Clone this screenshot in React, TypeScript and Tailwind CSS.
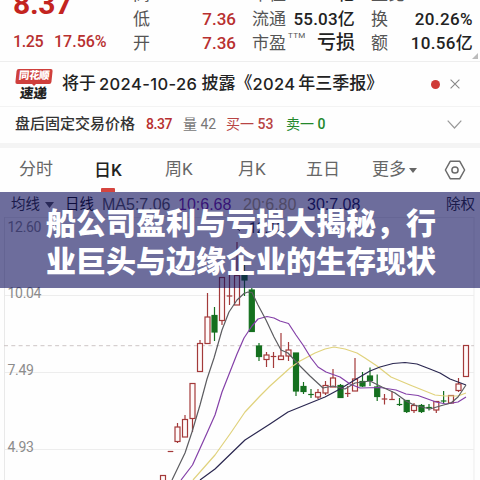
import React from 'react';

type Tone = 'up' | 'down';

interface Candle {
  x: number;
  high: number;
  top: number;
  bottom: number;
  low: number;
  tone: Tone;
}

const c = (x: number, high: number, top: number, bottom: number, low: number, tone: Tone = 'up'): Candle => ({
  x, high, top, bottom, low, tone,
});

// x, high, body top, body bottom, low
const candles: Candle[] = [
  c(163, 475.5, 475.5, 490, 490),
  c(170.5, 451.5, 451.5, 451.5, 451.5),
  c(177.5, 423, 427, 441.5, 443),
  c(185, 415, 419.5, 437, 437),
  c(192.5, 383.5, 383.5, 418.5, 432),
  c(200, 340, 343.5, 371.5, 371.5),
  c(207.5, 293, 317, 343.5, 343.5),
  c(214.5, 307, 315.5, 332, 341, 'down'),
  c(222, 277.5, 277.5, 320.5, 325),
  c(229.5, 272, 296, 296, 305),
  c(237, 242, 275.5, 305, 305),
  c(244.5, 262, 272, 280, 296, 'down'),
  c(251.8, 288, 290, 331.5, 332, 'down'),
  c(259, 343, 346, 356.5, 361, 'down'),
  c(266.5, 352, 355, 359.5, 367),
  c(273.5, 352, 356.5, 356.5, 368),
  c(281, 333, 356, 359.5, 359.5),
  c(288.5, 342, 350, 356, 361),
  c(296, 353, 353, 391, 396, 'down'),
  c(303.5, 382, 386.5, 391.5, 394, 'down'),
  c(311, 389, 394.5, 394.5, 398, 'down'),
  c(318, 389, 392.5, 397, 399),
  c(325.5, 381, 385.5, 393, 395),
  c(333, 369, 378, 387, 387),
  c(340.5, 384, 385.5, 397.5, 397.5, 'down'),
  c(347.7, 386, 393.5, 393.5, 397),
  c(355, 358, 379, 391, 391),
  c(362.5, 372, 381.5, 386, 387, 'down'),
  c(370, 367.5, 376, 380.5, 386, 'down'),
  c(377.2, 374.5, 387, 396.5, 401, 'down'),
  c(384.5, 394, 399, 399, 404.5),
  c(392, 391, 399.5, 399.5, 400),
  c(399.5, 398, 404.5, 404.5, 406, 'down'),
  c(406.7, 400, 400.5, 411.5, 413, 'down'),
  c(414, 403, 405.5, 410.5, 413),
  c(421.5, 404, 405.5, 411.5, 413, 'down'),
  c(429, 404, 407.5, 407.5, 410.5, 'down'),
  c(436.3, 401.5, 401.5, 410, 413),
  c(443.6, 391, 401, 401, 403.5, 'down'),
  c(451, 395.5, 395.5, 403, 403),
  c(458.5, 378, 384, 390.5, 392),
  c(466, 345.5, 345.5, 376.5, 376.5),
];

const averages = [
  {
    color: '#e0d27c',
    points: '193,480 215,455 230,434 245,412 260,396 270,386 290,368 300,361 315,353 325,349 334,347 345,349 357,353 365,358 377,366 391,377 410,385 435,395 445,396 458,396 466,393',
  },
  {
    color: '#2a2750',
    points: '200,480 215,469 245,440 270,424 288,412 325,397 340,389 358,378 370,371 380,367 393,363.5 405,362.5 417,364 430,369 440,373 450,379 458,382 466,385',
  },
  {
    color: '#8440a8',
    points: '181,480 192.5,465 207,433 215,415 222,392 237,354 244,338 252,326 258,319 267,316.5 274,318 280,321 288.5,323.5 296,335 303,345 311,358 318,367 326,372 340,377 350,384 360,388 380,387.5 396,390 406,394 418,395.5 436,402 446,404 458,402 466,397',
  },
  {
    color: '#5c5c60',
    points: '172,480 185,453 192,432 200,405 207,379 214,358 222,330 229,312 237,300 244,293.5 248,292 252,292.5 258,305 266,320 274,337 281,350 288,353 300,366 310,376 323,388 333,386 345,389 355,383 370,381 382,387 395,393 406,401 414,405 430,409 440,406 451,403 458,397 466,385',
  },
];

const gridLines = [217.5, 295.5, 372.5, 449.5];
const priceLabels = [
  { y: 232, label: '12.60' },
  { y: 298, label: '10.04' },
  { y: 375, label: '7.49' },
  { y: 452, label: '4.93' },
];

const CandleMark: React.FC<{ candle: Candle }> = ({ candle }) => {
  const { x, high, top, bottom, low, tone } = candle;
  const color = tone === 'up' ? '#a33a3a' : '#15701f';
  const flat = top === bottom;
  return (
    <g stroke={color} strokeWidth="1.2">
      <line x1={x} x2={x} y1={high} y2={top} />
      <line x1={x} x2={x} y1={bottom} y2={low} />
      {flat ? (
        <line x1={x - 2.8} x2={x + 2.8} y1={top} y2={top} />
      ) : (
        <rect
          x={x - 2.5}
          y={top}
          width="5"
          height={bottom - top}
          fill={tone === 'up' ? '#fffafa' : color}
        />
      )}
    </g>
  );
};

const KLineChart: React.FC = () => (
  <svg className="block w-[480px] h-[264px]" viewBox="0 216 480 264">
    {gridLines.map((y) => (
      <line key={y} x1="4" x2="474" y1={y} y2={y} stroke="#ededed" />
    ))}
    <line x1="4.5" x2="4.5" y1="217" y2="480" stroke="#e9e9e9" />
    <line x1="474" x2="474" y1="217" y2="480" stroke="#ededed" />
    <line x1="4" x2="474" y1="345.7" y2="345.7" stroke="#cdc6c6" strokeDasharray="4 3.3" />
    {priceLabels.map(({ y, label }) => (
      <text key={label} x="7.5" y={y} fill="#8c8c8c" fontSize="14" fontFamily="Roboto" letterSpacing="-0.3">
        {label}
      </text>
    ))}
    <path d="M237 228.5H246M240 226L237 228.5L240 231" fill="none" stroke="#333" />
    <text x="249" y="233" fill="#333" fontSize="14" fontFamily="Roboto">12.12</text>
    {candles.map((candle) => (
      <CandleMark key={candle.x} candle={candle} />
    ))}
    {averages.map(({ color, points }) => (
      <polyline key={color} points={points} fill="none" stroke={color} strokeWidth="1.2" strokeLinejoin="round" />
    ))}
  </svg>
);

const QuoteHeader: React.FC = () => (
  <header className="flex h-[62px] overflow-hidden border-b border-[#eeeeee] text-[17px] leading-[24.5px] text-[#555] whitespace-nowrap">
    <div className="w-[120px] shrink-0 pl-[13px] text-[#c3241f]">
      <div className="-mt-[16px] h-[46px] text-[30px] leading-[40px] font-bold tracking-[-0.3px]">8.37</div>
      <div className="flex gap-[11px] text-[16px] font-medium text-[#b83030]">
        <span className="w-[30px] tracking-[-0.4px]">1.25</span>
        <span>17.56%</span>
      </div>
    </div>
    <div className="-mt-[18px] w-[116px] shrink-0 pl-[13px]">
      {[['高', '8.54'], ['低', '7.36'], ['开', '7.36']].map(([name, value]) => (
        <div key={name} className="flex justify-between">
          <span>{name}</span>
          <span className="font-medium text-[#b83030]">{value}</span>
        </div>
      ))}
    </div>
    <div className="-mt-[18px] w-[119px] shrink-0 pl-[16px]">
      <div className="flex justify-between"><span>市值</span><span className="font-medium text-[#222]">77.77亿</span></div>
      <div className="flex justify-between"><span>流通</span><span className="font-medium text-[#222] tracking-[0.2px]">55.03亿</span></div>
      <div className="flex">
        <span>市盈</span>
        <span className="ml-[2px] -mt-[7px] text-[8px] tracking-[0.3px]">TTM</span>
        <span className="ml-auto text-[19px] font-medium text-[#222]">亏损</span>
      </div>
    </div>
    <div className="-mt-[18px] w-[118px] shrink-0 pl-[16px]">
      <div>量比</div>
      <div className="flex justify-between"><span>换</span><span className="font-medium text-[#222] tracking-[0.4px]">20.26%</span></div>
      <div className="flex justify-between"><span>额</span><span className="font-medium text-[#222] tracking-[0.3px]">10.56亿</span></div>
    </div>
    <svg className="mt-auto mb-[2px] w-[6px] h-[6px] shrink-0 -ml-[1px]" viewBox="0 0 6 6">
      <path d="M6 0V6H0Z" fill="#bbb" />
    </svg>
  </header>
);

const NoticeRow: React.FC = () => (
  <div className="flex h-[44px] items-center pl-[15px] whitespace-nowrap">
    <div className="flex w-[37px] flex-col items-center">
      <div className="flex h-[15px] w-[36px] -skew-x-6 items-center justify-center rounded-[2px] bg-[#cf3f3c] text-[10.5px] font-black leading-none text-white tracking-[-0.4px]">
        同花顺
      </div>
      {/* small pointer under the badge */}
      <svg className="-mt-px h-[3px] w-[6px]" viewBox="0 0 6 3">
        <path d="M0 0H6L3 3Z" fill="#cf3f3c" />
      </svg>
      <div className="-skew-x-6 text-[13.5px] font-black leading-[14px] text-[#222]">速递</div>
    </div>
    <div className="ml-[10px] flex items-center text-[17px] font-medium text-[#222]">
      <span>将于</span>
      <span className="ml-[3px] mr-[4px] font-[Inter] text-[16.5px] tracking-[0.4px]">2024-10-26</span>
      <span>披露</span>
      <span>《</span>
      <span className="mr-[3px] font-[Inter] text-[16.5px] tracking-[0.35px]">2024</span>
      <span>年三季报》</span>
    </div>
    <span className="ml-auto h-[9px] w-[9px] rounded-full bg-[#cf3b37]" />
    <svg className="ml-[10px] mr-[20px] h-[10px] w-[10px]" viewBox="0 0 10 10">
      <path d="M.6.6 9.4 9.4M9.4.6.6 9.4" stroke="#888" strokeWidth="1.1" />
    </svg>
  </div>
);

const AfterHoursRow: React.FC = () => (
  <div className="flex h-[37px] items-center pl-[15px] text-[14px] whitespace-nowrap shadow-[inset_0_1px_0_#f3f3f3]">
    <span className="w-[131px] text-[15px] font-medium text-[#333]">盘后固定交易价格</span>
    <span className="w-[37px] font-medium text-[#b83030] tracking-[-0.4px]">8.37</span>
    <span className="w-[43px] text-[#777]">量 42</span>
    <span className="w-[60px] text-[#b84444]">买一 <b className="font-medium">53</b></span>
    <span className="text-[#23882b]">卖一 <b className="font-medium">0</b></span>
    <svg className="ml-auto mr-[18px] h-[9px] w-[15px]" viewBox="0 0 15 9">
      <path d="M.7.7 7.5 8 14.3.7" fill="none" stroke="#999" strokeWidth="1.2" />
    </svg>
  </div>
);

const PeriodTabs: React.FC = () => (
  <nav className="flex h-[44px] items-center pl-[19px] text-[17px] text-[#666] whitespace-nowrap">
    <span className="w-[75px]">分时</span>
    <span className="flex h-full w-[71px] flex-col">
      <span className="flex-1 pt-[9px] leading-[26px] font-medium text-[#222]">日K</span>
      <span className="ml-[7px] h-[4px] w-[14px] rounded-t-[1px] bg-[#d5453f]" />
    </span>
    <span className="w-[73px]">周K</span>
    <span className="w-[68px]">月K</span>
    <span className="w-[66px]">五日</span>
    <span className="flex items-center gap-[3px]">
      更多
      <svg className="h-[5px] w-[8px]" viewBox="0 0 8 5">
        <path d="M0 0H8L4 5Z" fill="#666" />
      </svg>
    </span>
    <svg className="ml-auto mr-[14px] h-[20px] w-[22px]" viewBox="0 0 22 20" fill="none" stroke="#6b6b6b" strokeWidth="1.5">
      <path d="M6.2 1.3H15.8L20.6 10L15.8 18.7H6.2L1.4 10Z" strokeLinejoin="round" />
      <circle cx="11" cy="10" r="3.1" />
    </svg>
  </nav>
);

const AverageLegend: React.FC = () => (
  <div className="flex h-[24px] items-center pl-[11px] pt-[2px] text-[14.5px] text-[#333] whitespace-nowrap">
    <span className="w-[34px]">均线</span>
    <svg className="mr-[11px] h-[6px] w-[9px]" viewBox="0 0 9 6">
      <path d="M0 0H9L4.5 6Z" fill="#555" />
    </svg>
    <span className="w-[37px] text-[#111]">日线</span>
    <div className="flex font-['Liberation_Sans'] text-[16px]">
      <span className="w-[76px] text-[#555]">MA5:7.06</span>
      <span className="w-[65px] text-[#7a1fa0]">10:6.68</span>
      <span className="w-[64px] text-[#b5a878]">20:6.80</span>
      <span className="text-[#1c1c50]">30:7.08</span>
    </div>
    <span className="ml-auto mr-[5px]">除权</span>
  </div>
);

const App: React.FC = () => {
  return (
    <main className="relative h-[480px] w-[480px] overflow-hidden bg-[#fefefe] font-[Roboto,'Noto_Sans_CJK_SC',sans-serif]">
      <QuoteHeader />
      <NoticeRow />
      <AfterHoursRow />
      <div className="h-[5px] bg-[#f4f4f4]" />
      <PeriodTabs />
      <AverageLegend />
      <KLineChart />

      {/* Headline banner over the chart */}
      <div className="absolute inset-x-0 top-[192px] flex h-[96px] flex-col justify-center bg-[rgba(12,12,90,0.6)] pl-[46px] pb-px text-[30px] font-black leading-[38px] text-white whitespace-nowrap font-['Noto_Sans_CJK_SC',sans-serif]">
        <h1>
          船公司盈利与亏损大揭秘，行
          <br />
          业巨头与边缘企业的生存现状
        </h1>
      </div>
    </main>
  );
};

export default App;
